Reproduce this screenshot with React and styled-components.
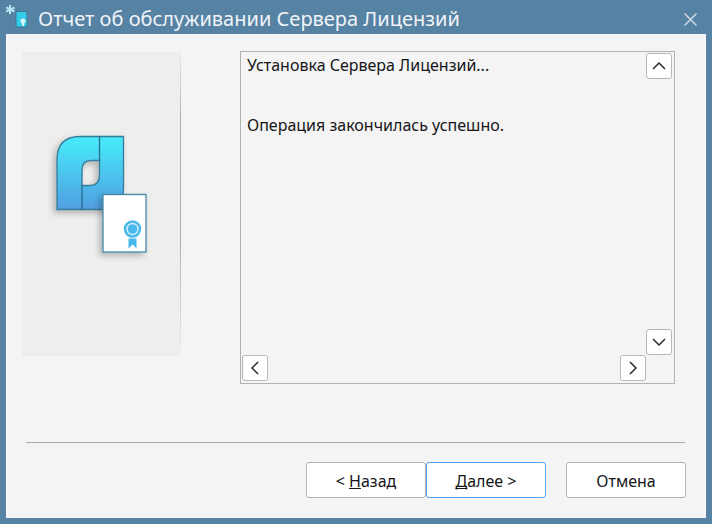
import React from "react";
import styled, { createGlobalStyle } from "styled-components";

const GlobalStyle = createGlobalStyle`
  * {
    box-sizing: border-box;
  }
  body {
    margin: 0;
    font-family: "Noto Sans", "Open Sans", sans-serif;
    color: #161618;
  }
`;

const Window = styled.div`
  display: flex;
  flex-direction: column;
  min-height: 100vh;
  padding: 0 6px 6px;
  background: #5682a3;
`;

const TitleBar = styled.header`
  display: flex;
  align-items: center;
  height: 34px;
  padding: 4px 8px 0 0;
`;

const Title = styled.h1`
  flex: 1;
  margin: 0 0 0 3px;
  font-size: 20px;
  font-weight: 400;
  line-height: 30px;
  color: #f0f4f8;
  white-space: nowrap;
`;

const AppIcon = styled.svg`
  display: block;
  align-self: flex-start;
  width: 29px;
  height: 28px;
`;

const CloseButton = styled.button`
  display: flex;
  padding: 0;
  border: 0;
  background: none;
  color: #d3dee7;
`;

const Content = styled.main`
  display: flex;
  flex: 1;
  flex-direction: column;
  background: #f4f4f4;
  border: 1px solid #fafafa;
`;

const Columns = styled.div`
  display: flex;
  align-items: flex-start;
  gap: 59px;
  padding: 16px 30px 0 15px;
`;

const Side = styled.aside`
  flex: none;
  width: 159px;
  height: 304px;
  margin-top: 1px;
  padding: 78px 0 0 27px;
  background: #eeeeee;
  border-right: 1px solid;
  border-image: linear-gradient(#eeeeee, #b4b4b4 20%, #b4b4b4 65%, #eeeeee) 1;
`;

const Report = styled.section`
  display: grid;
  flex: 1;
  grid-template-columns: 1fr 26px;
  grid-template-rows: 302px 26px;
  padding: 1px 2px 2px 1px;
  border: 1px solid #b2b2b2;
`;

const ReportText = styled.textarea`
  display: block;
  width: 100%;
  height: 100%;
  padding: 2px 5px;
  border: 0;
  outline: 0;
  resize: none;
  overflow: hidden;
  background: transparent;
  color: inherit;
  font-family: inherit;
  font-size: 16px;
  line-height: 20px;
`;

const Scroll = styled.div`
  display: flex;
  flex-direction: ${(props) => (props.$vertical ? "column" : "row")};
  justify-content: space-between;
`;

const ArrowButton = styled.button`
  display: flex;
  align-items: center;
  justify-content: center;
  width: 26px;
  height: 26px;
  padding: 0;
  background: #ffffff;
  border: 1px solid #b8b8b8;
  border-radius: 3px;
  color: #2b2b2b;
`;

const Footer = styled.footer`
  display: flex;
  justify-content: flex-end;
  margin: 58px 20px 0 19px;
  padding-top: 19px;
  border-top: 1px solid #ababab;
`;

const Button = styled.button`
  width: 120px;
  height: 36px;
  margin-left: ${(props) => (props.$apart ? "20px" : "0")};
  padding: 2px 0 0;
  background: #ffffff;
  border: 1px solid ${(props) => (props.$primary ? "#51a3f5" : "#b5b5b5")};
  border-radius: 3px;
  color: inherit;
  font-family: inherit;
  font-size: 16px;
  line-height: 20px;

  u {
    text-decoration-skip-ink: none;
  }
`;

const FooterButtons = styled.div`
  display: flex;
  margin-right: -1px;
`;

const arrows = {
  up: "M3 12 L9 6 L15 12",
  down: "M3 6 L9 12 L15 6",
  left: "M12 3 L6 9 L12 15",
  right: "M6 3 L12 9 L6 15",
};

const Arrow = ({ direction, label }) => (
  <ArrowButton type="button" aria-label={label}>
    <svg width="18" height="18" viewBox="0 0 18 18" fill="none">
      <path d={arrows[direction]} stroke="currentColor" strokeWidth="1.5" />
    </svg>
  </ArrowButton>
);

const Logo = () => (
  <svg width="100" height="126" viewBox="49 130 100 126" overflow="visible">
    <defs>
      <linearGradient id="logoFill" x1="0" y1="0" x2="0" y2="1">
        <stop offset="0.1" stopColor="#48e5f9" />
        <stop offset="1" stopColor="#529ee0" />
      </linearGradient>
      <filter id="shadow" x="-30%" y="-30%" width="160%" height="160%">
        <feDropShadow
          dx="-3"
          dy="3"
          stdDeviation="3"
          floodColor="#000"
          floodOpacity="0.25"
        />
      </filter>
    </defs>
    <g filter="url(#shadow)">
      <path
        d="M57 209.500 V160 Q57 136.500 80 136.500 H123.500 V189 Q123.500 209.500 103 209.500 Z M82 185.500 H90 Q99.500 185.500 99.500 175 V160.500 H91 Q82 160.500 82 170 Z"
        fill="url(#logoFill)"
        fillRule="evenodd"
        stroke="#347b99"
        strokeWidth="1.3"
      />
      <path d="M99.500 136.500 V161 M82 185 V209.500" stroke="#256d87" strokeWidth="1.3" />
    </g>
    <g filter="url(#shadow)">
      <rect
        x="103"
        y="194.500"
        width="43"
        height="57.500"
        fill="#fff"
        stroke="#4388a6"
        strokeWidth="1.3"
      />
    </g>
    <circle cx="132.500" cy="229" r="8.700" fill="#49b8ea" />
    <circle cx="132.500" cy="229" r="5.500" fill="#49b8ea" stroke="#d5effc" strokeWidth="1.400" />
    <path d="M128.500 238.500 H136.500 V248.500 L132.700 244.500 L128.500 248.500 Z" fill="#49b8ea" />
  </svg>
);

const App = () => (
  <Window>
    <GlobalStyle />
    <TitleBar>
      <AppIcon viewBox="6 4 29 28" aria-hidden="true">
        <path
          d="M10 5 V14 M6 7.500 L14.500 11.500 M14.500 7.500 L6 11.500"
          stroke="#b9e3ef"
          strokeWidth="2"
        />
        <rect x="16" y="11.500" width="11" height="15.500" fill="#35cbea" stroke="#397894" />
        <circle cx="23" cy="21" r="2.500" fill="#d8f5fc" />
        <path d="M22 21 H24 V26 H22 Z" fill="#d8f5fc" />
      </AppIcon>
      <Title>Отчет об обслуживании Сервера Лицензий</Title>
      <CloseButton type="button" aria-label="Закрыть">
        <svg width="15" height="15" viewBox="0 0 15 15">
          <path d="M1.500 1.500 L13.500 13.500 M13.500 1.500 L1.500 13.500" stroke="currentColor" strokeWidth="1.400" />
        </svg>
      </CloseButton>
    </TitleBar>
    <Content>
      <Columns>
        <Side>
          <Logo />
        </Side>
        <Report>
          <ReportText
            readOnly
            spellCheck={false}
            aria-label="Отчет"
            defaultValue={
              "Установка Сервера Лицензий...\n\n\nОперация закончилась успешно."
            }
          />
          <Scroll $vertical>
            <Arrow direction="up" label="Вверх" />
            <Arrow direction="down" label="Вниз" />
          </Scroll>
          <Scroll>
            <Arrow direction="left" label="Влево" />
            <Arrow direction="right" label="Вправо" />
          </Scroll>
        </Report>
      </Columns>
      <Footer>
        <FooterButtons>
          <Button type="button">
            &lt; <u>Н</u>азад
          </Button>
          <Button type="button" $primary>
            <u>Д</u>алее &gt;
          </Button>
          <Button type="button" $apart>
            Отмена
          </Button>
        </FooterButtons>
      </Footer>
    </Content>
  </Window>
);

export default App;
